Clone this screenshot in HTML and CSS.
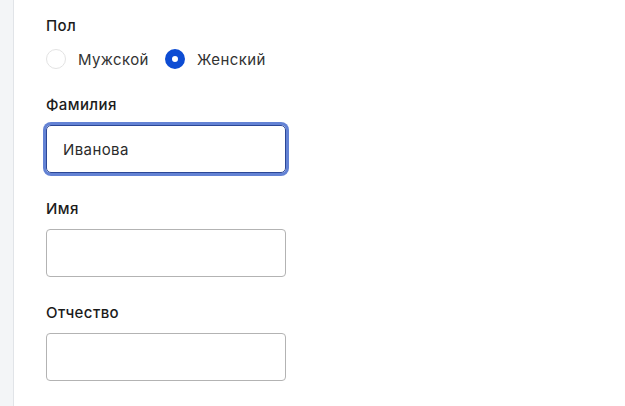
FILE: index.html
```html
<!DOCTYPE html>
<html lang="ru">
<head>
<meta charset="utf-8">
<link rel="stylesheet" href="styles.css">
</head>
<body>
<div class="page">
  <aside class="strip"></aside>
  <main class="form">
    <div class="field">
      <div class="label">Пол</div>
      <div class="radios">
        <label class="radio"><span class="dot"></span><span>Мужской</span></label>
        <label class="radio"><span class="dot on"></span><span>Женский</span></label>
      </div>
    </div>
    <div class="field">
      <div class="label">Фамилия</div>
      <div class="input focus">Иванова</div>
    </div>
    <div class="field">
      <div class="label">Имя</div>
      <div class="input"></div>
    </div>
    <div class="field">
      <div class="label">Отчество</div>
      <div class="input"></div>
    </div>
  </main>
</div>
</body>
</html>
```
FILE: styles.css
```css
html, body {
  margin: 0;
  padding: 0;
  background: #fff;
}
body {
  font-family: Inter, "Open Sans", "Liberation Sans", sans-serif;
  color: #1f1f1f;
  letter-spacing: 0.4px;
}
.page {
  display: flex;
  height: 406px;
}
.strip {
  width: 13px;
  background: #f3f5f7;
  border-right: 1px solid #e1e4e8;
  flex: none;
}
.form {
  padding: 16px 0 0 32px;
  display: flex;
  flex-direction: column;
  gap: 26px;
}
.field {
  display: flex;
  flex-direction: column;
  gap: 10px;
}
.field:first-child {
  gap: 13px;
}
.label {
  font-size: 15px;
  font-weight: 500;
  line-height: 20px;
  height: 20px;
  color: #1b1b1b;
}
.radios {
  display: flex;
  gap: 16px;
  height: 20px;
}
.radio {
  display: flex;
  align-items: center;
  gap: 12px;
  font-size: 15px;
  color: #333;
}
.dot {
  width: 20px;
  height: 20px;
  box-sizing: border-box;
  border-radius: 50%;
  border: 1px solid #e3e3e3;
}
.dot.on {
  border: 7px solid #0d4cd3;
}
.input {
  width: 240px;
  height: 48px;
  box-sizing: border-box;
  border: 1px solid #b3b3b3;
  border-radius: 4px;
  padding: 0 16px;
  display: flex;
  align-items: center;
  font-size: 15px;
  color: #2b2b2b;
}
.input.focus {
  border: 1px solid #2b4796;
  box-shadow: 0 0 0 3px #6382d4;
  border-radius: 5px;
}
```
